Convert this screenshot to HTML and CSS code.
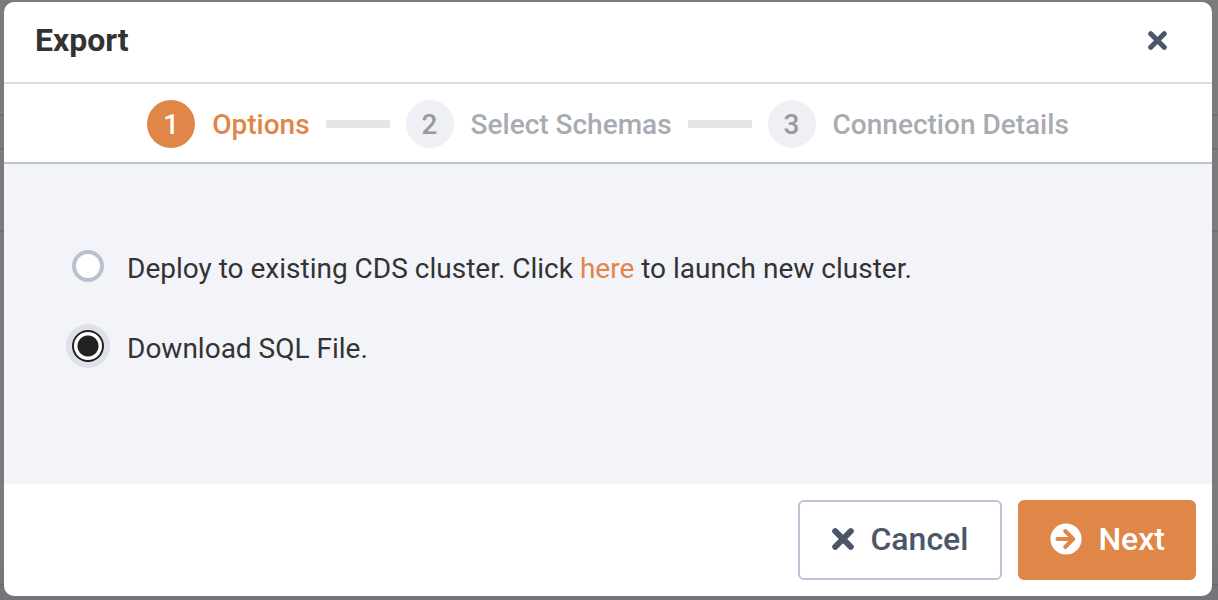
FILE: index.html
```html
<!DOCTYPE html>
<html lang="en">
<head>
<meta charset="utf-8">
<title>Export</title>
<link rel="stylesheet" href="styles.css">
</head>
<body>
<form class="dialog" role="dialog" aria-labelledby="dialog-title">
  <header class="dialog-header">
    <h1 class="dialog-title" id="dialog-title">Export</h1>
    <button class="close" type="button" aria-label="Close">
      <svg class="cross cross-small" viewBox="0 0 22 22" aria-hidden="true"><path d="M3.2 3.2 18.8 18.8M18.8 3.2 3.2 18.8"/></svg>
    </button>
  </header>
  <ol class="steps">
    <li class="step step-active"><span class="step-number">1</span><span class="step-name">Options</span></li>
    <li class="step"><span class="step-number">2</span><span class="step-name">Select Schemas</span></li>
    <li class="step"><span class="step-number">3</span><span class="step-name">Connection Details</span></li>
  </ol>
  <main class="options">
    <div class="option">
      <input class="radio" type="radio" name="target" id="deploy">
      <label for="deploy">Deploy to existing CDS cluster. Click <a class="link" href="#">here</a> to launch new cluster.</label>
    </div>
    <div class="option">
      <input class="radio" type="radio" name="target" id="download" checked>
      <label for="download">Download SQL File.</label>
    </div>
  </main>
  <footer class="actions">
    <button class="button" type="button">
      <svg class="cross" viewBox="0 0 22 22" aria-hidden="true"><path d="M3.2 3.2 18.8 18.8M18.8 3.2 3.2 18.8"/></svg>
      Cancel
    </button>
    <button class="button button-primary" type="submit">
      <svg class="arrow" viewBox="0 0 32 32" aria-hidden="true"><circle cx="16" cy="16" r="15.6"/><path d="M7.5 16H23M15.2 8 23.2 16 15.2 24"/></svg>
      Next
    </button>
  </footer>
</form>
</body>
</html>
```
FILE: styles.css
```css
* {
  box-sizing: border-box;
}

body {
  display: flex;
  min-height: 100vh;
  margin: 0;
  padding: 2px 6px 4px 4px;
  background:
    linear-gradient(#707072, #707072) 0 114px / 100% 2px no-repeat,
    linear-gradient(#707072, #707072) 0 148px / 100% 2px no-repeat,
    linear-gradient(#707072, #707072) 0 230px / 100% 2px no-repeat,
    linear-gradient(#6a6a6c, #6a6a6c) 0 584px / 100% 2px no-repeat,
    linear-gradient(#7c7b7b, #7c7b7b 90%, #737478);
  color: #333;
  font-family: Roboto, sans-serif;
}

.dialog {
  display: flex;
  flex: 1;
  flex-direction: column;
  overflow: hidden;
  border-radius: 10px;
  background: #fff;
}

.dialog-header {
  display: flex;
  align-items: center;
  justify-content: space-between;
  padding: 18px 40px 22px 31px;
  border-bottom: 2px solid #dcdcdc;
}

.dialog-title {
  margin: 0;
  font-size: 32px;
  font-weight: 700;
  line-height: 40px;
}

.close {
  display: flex;
  padding: 5px;
  border: 0;
  background: none;
  color: #4d5667;
}

.cross {
  width: 22px;
  height: 22px;
  fill: none;
  stroke: currentColor;
  stroke-linecap: round;
  stroke-width: 6;
}

.cross-small {
  width: 19px;
  height: 19px;
}

.steps {
  display: flex;
  align-items: center;
  justify-content: center;
  margin: 0;
  padding: 15px 0 13px;
  border-bottom: 2px solid #bac4d4;
  list-style: none;
}

.step {
  display: flex;
  align-items: center;
  color: #a7acb3;
  font-size: 28px;
  font-weight: 500;
  line-height: 48px;
}

.step + .step::before {
  width: 64px;
  height: 8px;
  margin: 0 16px;
  background: #e6e6e6;
  content: "";
}

.step-number {
  width: 48px;
  height: 48px;
  margin-right: 17px;
  border-radius: 50%;
  background: #eff0f5;
  color: #999;
  line-height: 50px;
  text-align: center;
}

.step-name {
  padding-top: 2px;
}

.step-active {
  color: #df8648;
}

.step-active .step-number {
  background: #df8648;
  color: #fff;
}

.options {
  display: flex;
  flex: 1;
  flex-direction: column;
  gap: 40px;
  padding: 85px 68px 83px;
  background: #f3f4f9;
}

.option {
  display: flex;
  align-items: center;
  gap: 23px;
  font-size: 28px;
  line-height: 40px;
}

.radio {
  width: 32px;
  height: 32px;
  margin: 0 0 6px;
  border: 4px solid #bac1ce;
  border-radius: 50%;
  background: #fff;
  appearance: none;
}

.radio:checked {
  border: 2px solid #222;
  background: radial-gradient(circle, #222 10px, #fff 11px);
  box-shadow: 0 0 0 6px #dee2e8;
}

.link {
  color: #df8648;
  text-decoration: none;
}

.actions {
  display: flex;
  justify-content: flex-end;
  gap: 16px;
  padding: 16px;
}

.button {
  display: flex;
  align-items: center;
  gap: 16px;
  padding: 18px 32px 20px;
  border: 2px solid #bac4d4;
  border-radius: 6px;
  background: #fff;
  color: #4d5667;
  font: 500 32px/38px Roboto, sans-serif;
}

.button-primary {
  padding: 18px 29px 20px 30px;
  border-color: #df8648;
  background: #df8648;
  color: #fff;
}

.arrow {
  width: 32px;
  height: 32px;
  fill: #fff;
}

.arrow path {
  fill: none;
  stroke: #df8648;
  stroke-linecap: round;
  stroke-linejoin: round;
  stroke-width: 4;
}
```
